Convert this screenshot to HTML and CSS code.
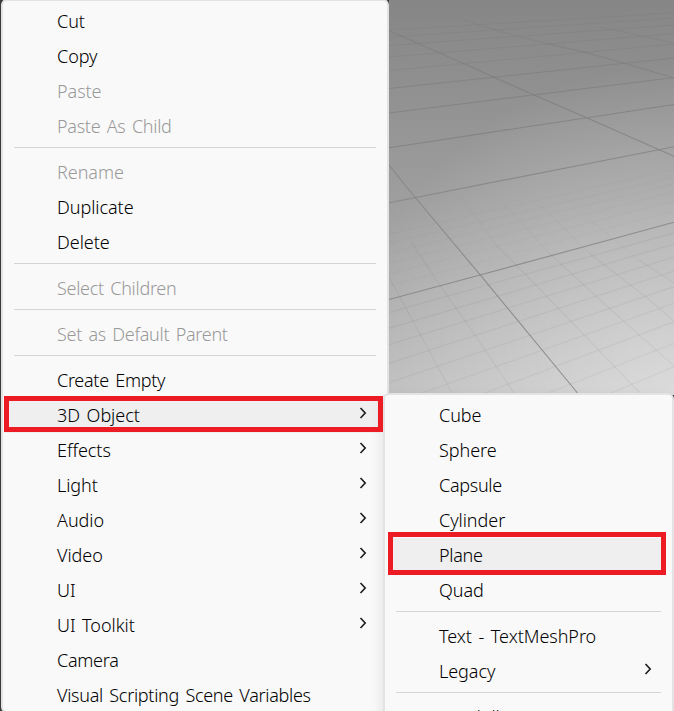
FILE: index.html
```
<!DOCTYPE html>
<html lang="en">
<head>
<meta charset="utf-8">
<title>Hierarchy context menu</title>
<link rel="stylesheet" href="styles.css">
</head>
<body>
<svg width="0" height="0" class="defs"><symbol id="chevron" viewBox="0 0 8 12"><path d="M1.5 1 L6.2 6 L1.5 11" fill="none" stroke="#1c1c1c" stroke-width="1.6"/></symbol></svg>
<main class="editor">
  <svg class="scene" viewBox="389 0 285 395" width="285" height="395">
    <g class="minor">
      <path d="M389 312.3L674 233M389 328.3L674 244M389 344.7L674 257M389 363.3L674 271M389 382.7L674 286.7M422 393L674 303.3M485 393L674 321.7M548 393L674 343.3M611 393L674 366.7"/>
      <path d="M389 277L452 393M412 243L441 287L466 322L514 393M496 245L529 278L640 393M549 253L609 308L674 366M589 253L646 297L674 321M639 260L674 283"/>
    </g>
    <g class="minor faint">
      <path d="M389 286L674 211M389 274L674 201M389 263L674 192M389 253L674 184M389 243L674 177M389 234L674 169"/>
      <path d="M389 205L412 243M460 195L496 245M500 200L549 253M540 205L589 253M590 220L639 260"/>
    </g>
    <g class="major">
      <path d="M389 299.5L480 275L674 222.3M389 202.7L674 146.7"/>
      <path d="M389 165L409 190L480 274.7L577.5 393"/>
      <path class="l2" d="M389 147.8L674 104.5M463 63.3L534 95L586.7 117.7L674 156.3"/>
      <path class="l3" d="M389 113L674 77.5M389 88.5L674 58M389 30.7L463 63.3M547 43.5L587 52.7L627 64L674 78"/>
      <path class="l4" d="M389 70.5L674 44M389 57L674 33.5M389 45.5L674 25M463 20L513 35L547 43.5M600 27L674 43"/>
      <path class="l5" d="M389 37L674 18M389 30L674 13"/>
    </g>
  </svg>

  <nav class="menu main-menu">
    <div class="item">Cut</div>
    <div class="item">Copy</div>
    <div class="item disabled">Paste</div>
    <div class="item disabled tight">Paste As Child</div>
    <hr>
    <div class="item disabled">Rename</div>
    <div class="item">Duplicate</div>
    <div class="item">Delete</div>
    <hr>
    <div class="item disabled tight">Select Children</div>
    <hr>
    <div class="item disabled tight">Set as Default Parent</div>
    <hr>
    <div class="item tight">Create Empty</div>
    <div class="item active">3D Object<svg class="chevron"><use href="#chevron"/></svg></div>
    <div class="item">Effects<svg class="chevron"><use href="#chevron"/></svg></div>
    <div class="item">Light<svg class="chevron"><use href="#chevron"/></svg></div>
    <div class="item">Audio<svg class="chevron"><use href="#chevron"/></svg></div>
    <div class="item">Video<svg class="chevron"><use href="#chevron"/></svg></div>
    <div class="item">UI<svg class="chevron"><use href="#chevron"/></svg></div>
    <div class="item">UI Toolkit<svg class="chevron"><use href="#chevron"/></svg></div>
    <div class="item tight">Camera</div>
    <div class="item tight">Visual Scripting Scene Variables</div>
  </nav>

  <nav class="menu sub-menu">
    <div class="item">Cube</div>
    <div class="item">Sphere</div>
    <div class="item tight">Capsule</div>
    <div class="item">Cylinder</div>
    <div class="item active tight">Plane</div>
    <div class="item">Quad</div>
    <hr>
    <div class="item">Text - TextMeshPro</div>
    <div class="item">Legacy<svg class="chevron"><use href="#chevron"/></svg></div>
    <hr>
    <div class="item">Ragdoll...</div>
  </nav>

  <div class="mark mark-object"></div>
  <div class="mark mark-plane"></div>
</main>
</body>
</html>
```
FILE: styles.css
```
* { box-sizing: border-box; }
body { margin: 0; overflow: hidden; }
.defs { position: absolute; }

.editor {
  position: relative;
  width: 674px;
  height: 711px;
  overflow: hidden;
  background: #3a3a3a;
  font: 330 18px/35px "Noto Sans", "Open Sans", sans-serif;
  color: #000;
}

.scene {
  position: absolute;
  left: 389px;
  top: 0;
  background:
    radial-gradient(circle 330px at 100% 100%, rgba(255,255,255,.46), rgba(255,255,255,0)),
    linear-gradient(#868686, #8f8f8f 20%, #9e9e9e 50%, #bebebe);
}
.scene path { fill: none; }
.minor { stroke: #000; stroke-opacity: .045; stroke-width: 1.3; }
.faint { stroke-opacity: .014; }
.major { stroke: #858585; stroke-width: 1.1; stroke-opacity: .85; }
.l2 { stroke: #7d7d7d; stroke-opacity: .75; }
.l3 { stroke: #7a7a7a; stroke-opacity: .55; }
.l4 { stroke: #7a7a7a; stroke-opacity: .35; }
.l5 { stroke: #7a7a7a; stroke-opacity: .2; }

.menu {
  position: absolute;
  background: #f9f9f9;
  border: 2px solid #e3e3e3;
  border-radius: 6px;
}
.main-menu { left: 1px; top: -1px; width: 388px; height: 714px; padding: 3px 6px 0 1px; }
.sub-menu {
  left: 383px;
  top: 393px;
  width: 291px;
  height: 340px;
  padding: 3px 6px 0 5px;
  box-shadow: 0 6px 14px rgba(0,0,0,.1);
}

.item {
  display: flex;
  justify-content: space-between;
  height: 35px;
  padding: 0 14px 0 53px;
  word-spacing: 2px;
  letter-spacing: -.05px;
  white-space: nowrap;
}
.sub-menu .item { padding: 0 14px 0 49px; }
.tight { letter-spacing: -.29px; }
.disabled { color: #999; }
.active { background: #efefef; }
.chevron { width: 8px; height: 12px; margin-top: 9px; }

hr { height: 1px; margin: 3px 5px 7px 10px; border: 0; background: #d5d5d5; }
.sub-menu hr { margin: 3px 5px 7px 6px; }

.mark { position: absolute; border: 5px solid #ed1c24; }
.mark-object { left: 4px; top: 396px; width: 379px; height: 36px; }
.mark-plane { left: 388px; top: 532px; width: 278px; height: 43px; }
```
